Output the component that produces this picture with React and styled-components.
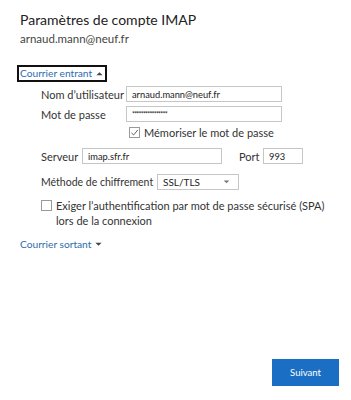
import styled, { createGlobalStyle } from 'styled-components';

const GlobalStyle = createGlobalStyle`
  body {
    margin: 0;
    background: #ffffff;
    font-family: Lato, 'Noto Sans', sans-serif;
    color: #333333;
  }
`;

export default function App() {
  return (
    <>
      <GlobalStyle />
      <Page>
        <Title>Paramètres de compte IMAP</Title>
        <Account>arnaud.mann@neuf.fr</Account>

        <SectionToggle $focused>
          Courrier entrant
          <Caret viewBox="0 0 8 5">
            <path d="M0.5 4.5 L4 1 L7.5 4.5 Z" fill="#444" />
          </Caret>
        </SectionToggle>

        <Form>
          <Row>
            <Label $width={85}>Nom d’utilisateur</Label>
            <Input $width={156}>arnaud.mann@neuf.fr</Input>
          </Row>
          <Row>
            <Label $width={85}>Mot de passe</Label>
            <Input $width={156} $secret>****************</Input>
          </Row>
          <CheckRow $indent={88}>
            <Box>
              <svg viewBox="0 0 12 12" width="9" height="9">
                <path d="M1.8 6.4 L4.8 9.3 L10.4 2.6" fill="none" stroke="#444" strokeWidth="1.1" />
              </svg>
            </Box>
            <CheckText>Mémoriser le mot de passe</CheckText>
          </CheckRow>
          <Row $top={8}>
            <Label $width={41}>Serveur</Label>
            <Input $width={140}>imap.sfr.fr</Input>
            <Label $width={24} $left={17}>Port</Label>
            <Input $width={40}>993</Input>
          </Row>
          <Row $top={10}>
            <Label $width={116} $size={10.5}>Méthode de chiffrement</Label>
            <Select>
              SSL/TLS
              <svg viewBox="0 0 8 5" width="7" height="4">
                <path d="M0.5 0.5 L4 4 L7.5 0.5 Z" fill="#777" />
              </svg>
            </Select>
          </Row>
          <CheckRow $indent={0} $top={10}>
            <Box />
            <CheckText>
              Exiger l’authentification par mot de passe sécurisé (SPA)
              <br />
              lors de la connexion
            </CheckText>
          </CheckRow>
        </Form>

        <SectionToggle>
          Courrier sortant
          <Caret viewBox="0 0 8 5">
            <path d="M0.5 0.5 L4 4 L7.5 0.5 Z" fill="#444" />
          </Caret>
        </SectionToggle>

        <Footer>
          <PrimaryButton>Suivant</PrimaryButton>
        </Footer>
      </Page>
    </>
  );
}

const Page = styled.div`
  display: flex;
  flex-direction: column;
  height: 400px;
  padding: 10px 12px 14px 20px;
  box-sizing: border-box;
`;

const Title = styled.div`
  font-size: 14px;
  line-height: 20px;
  color: #222222;
`;

const Account = styled.div`
  margin-top: 2px;
  font-size: 11.5px;
  line-height: 14px;
  color: #444444;
`;

const SectionToggle = styled.div`
  display: flex;
  align-items: center;
  gap: 4px;
  align-self: flex-start;
  margin-top: ${({ $focused }) => ($focused ? '19px' : '10px')};
  margin-left: ${({ $focused }) => ($focused ? '-3px' : '0')};
  padding: ${({ $focused }) => ($focused ? '0 2px 0 1px' : '0')};
  border: ${({ $focused }) => ($focused ? '2px solid #111' : 'none')};
  font-size: 10.2px;
  line-height: 13px;
  color: #2b6cb0;
`;

const Caret = styled.svg`
  width: 7px;
  height: 5px;
`;

const Form = styled.div`
  display: flex;
  flex-direction: column;
  padding-left: 21px;
  margin-top: 4px;
`;

const Row = styled.div`
  display: flex;
  align-items: center;
  margin-top: ${({ $top }) => ($top ? `${$top}px` : '4px')};
  &:first-child {
    margin-top: 0;
  }
`;

const Label = styled.div`
  width: ${({ $width }) => $width}px;
  flex-shrink: 0;
  margin-left: ${({ $left }) => ($left ? `${$left}px` : '0')};
  font-size: ${({ $size }) => ($size ? `${$size}px` : '11px')};
  color: #333333;
  white-space: nowrap;
`;

const Input = styled.div`
  width: ${({ $width }) => $width}px;
  flex-shrink: 0;
  height: 16px;
  box-sizing: border-box;
  border: 1px solid #c6c6c6;
  padding: 0 5px;
  display: flex;
  align-items: center;
  font-size: ${({ $secret }) => ($secret ? '7px' : '9.3px')};
  color: #222222;
  letter-spacing: ${({ $secret }) => ($secret ? '-0.8px' : '0')};
  overflow: hidden;
  white-space: nowrap;
`;

const Select = styled.div`
  width: 82px;
  flex-shrink: 0;
  height: 16px;
  box-sizing: border-box;
  border: 1px solid #c6c6c6;
  padding: 0 8px 0 5px;
  display: flex;
  align-items: center;
  justify-content: space-between;
  font-size: 10px;
  color: #222222;
`;

const CheckRow = styled.div`
  display: flex;
  align-items: flex-start;
  gap: 4px;
  margin-top: ${({ $top }) => ($top ? `${$top}px` : '5px')};
  margin-left: ${({ $indent }) => $indent}px;
`;

const Box = styled.div`
  width: 11px;
  height: 11px;
  box-sizing: border-box;
  border: 1px solid #9a9a9a;
  display: flex;
  align-items: center;
  justify-content: center;
  flex-shrink: 0;
`;

const CheckText = styled.div`
  font-size: 11px;
  line-height: 15px;
  color: #333333;
  margin-top: -2px;
  white-space: nowrap;
`;

const Footer = styled.div`
  display: flex;
  justify-content: flex-end;
  margin-top: auto;
`;

const PrimaryButton = styled.div`
  width: 67px;
  height: 27px;
  display: flex;
  align-items: center;
  justify-content: center;
  background: #1a6fc4;
  color: #ffffff;
  font-size: 9.5px;
`;
